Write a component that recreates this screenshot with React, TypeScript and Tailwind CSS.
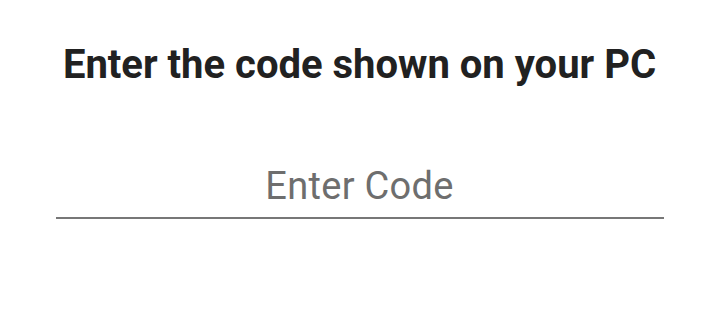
import React, { useState } from 'react';

const App: React.FC = () => {
  const [code, setCode] = useState('');

  return (
    <div className="w-[719px] h-[311px] bg-white flex flex-col items-center" style={{ fontFamily: 'Roboto, sans-serif' }}>
      <h1 className="mt-[41px] text-[40px] leading-[48px] font-bold text-[#212121]">
        Enter the code shown on your PC
      </h1>
      <input
        value={code}
        onChange={(e) => setCode(e.target.value)}
        placeholder="Enter Code"
        className="mt-[74px] w-[608px] h-[56px] pb-[8px] text-center text-[38px] tracking-[0.3px] text-[#212121] placeholder-[#6e6e6e] bg-transparent border-b-2 border-[#777777] outline-none"
      />
    </div>
  );
};

export default App;
